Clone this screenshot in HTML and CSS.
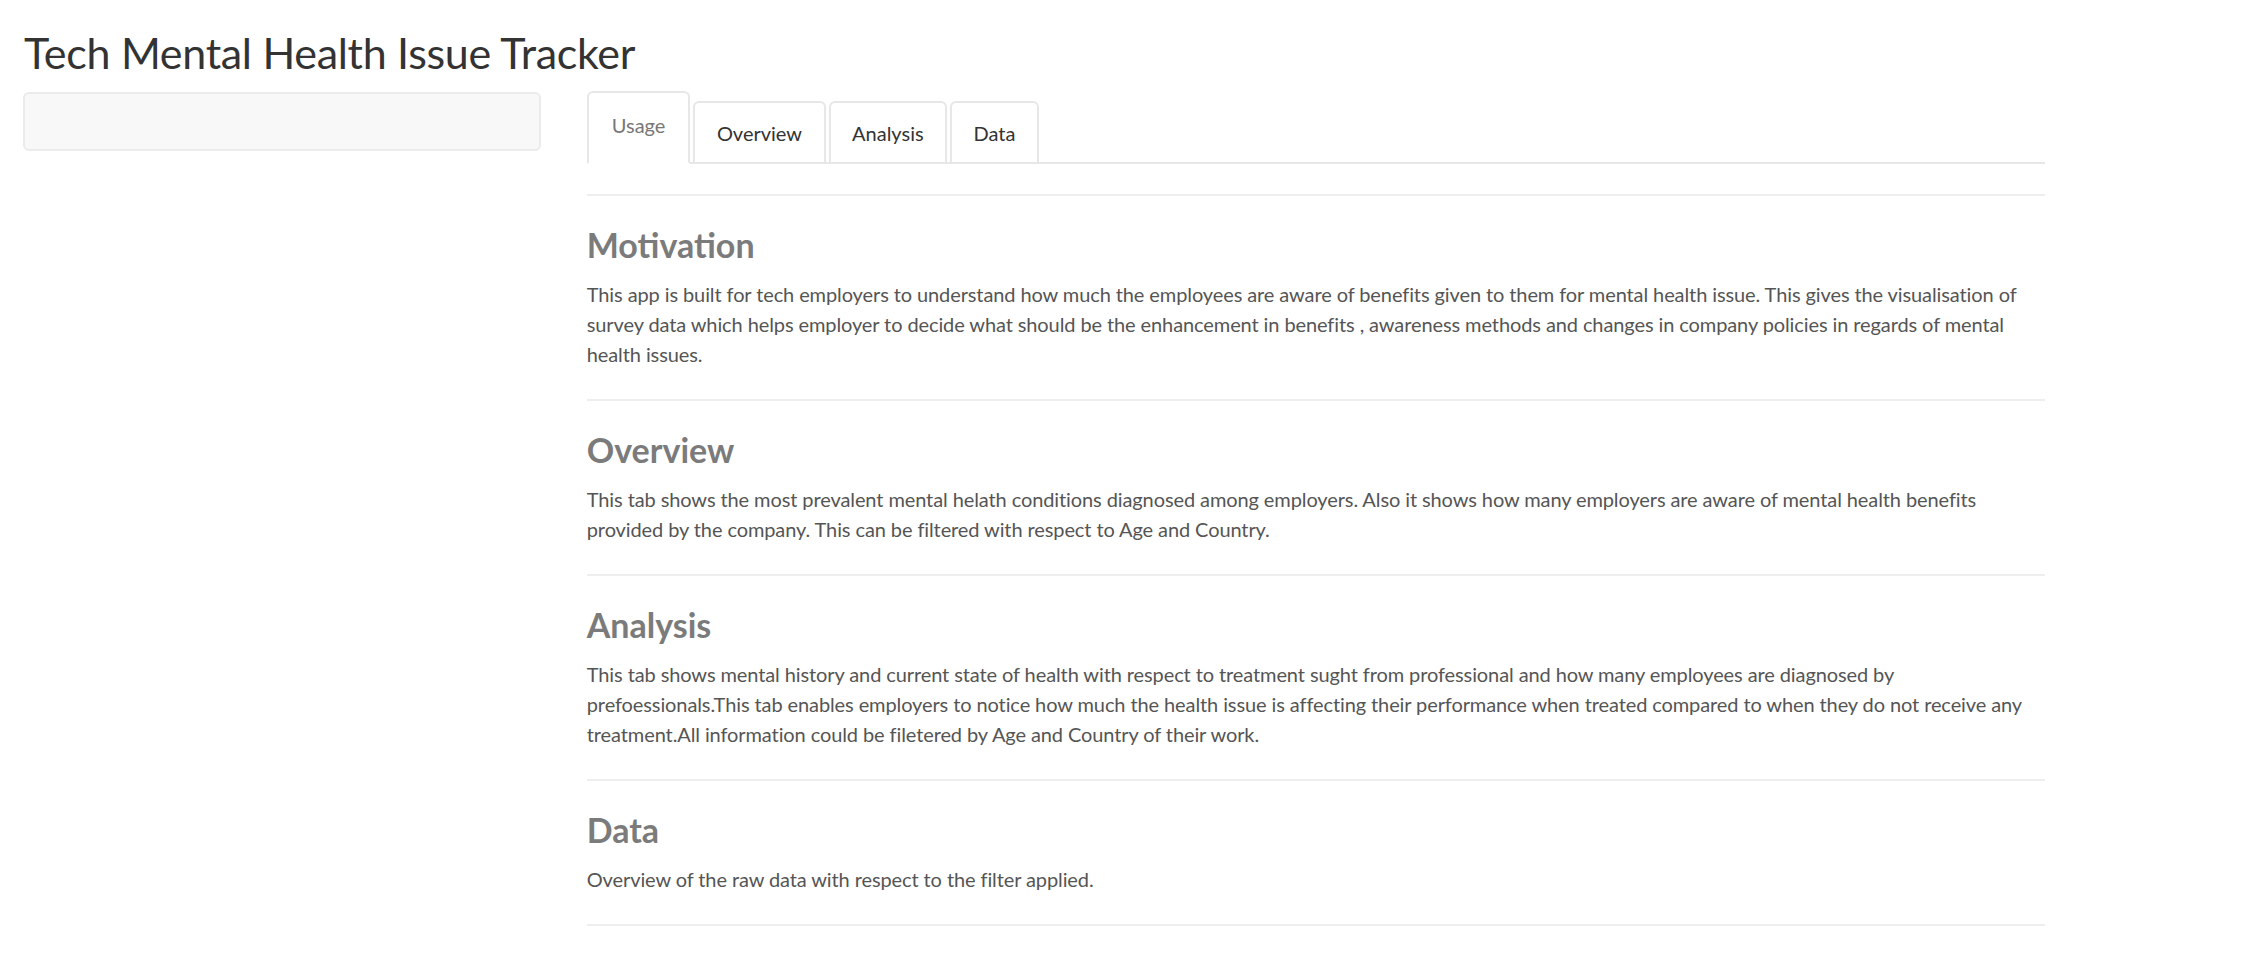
FILE: index.html
```html
<!DOCTYPE html>
<html lang="en">
<head>
<meta charset="utf-8">
<title>Tech Mental Health Issue Tracker</title>
<link rel="stylesheet" href="styles.css">
</head>
<body>
<div class="page">
  <h2 class="title">Tech Mental Health Issue Tracker</h2>
  <div class="row">
    <div class="side">
      <div class="well"></div>
    </div>
    <div class="main">
      <ul class="tabs">
        <li class="tab active">Usage</li>
        <li class="tab">Overview</li>
        <li class="tab">Analysis</li>
        <li class="tab">Data</li>
      </ul>
      <div class="content">
        <hr class="rule">
        <h3 class="head">Motivation</h3>
        <p class="text">This app is built for tech employers to understand how much the employees are aware of benefits given to them for mental health issue. This gives the visualisation of survey data which helps employer to decide what should be the enhancement in benefits , awareness methods and changes in company policies in regards of mental health issues.</p>
        <hr class="rule">
        <h3 class="head">Overview</h3>
        <p class="text">This tab shows the most prevalent mental helath conditions diagnosed among employers. Also it shows how many employers are aware of mental health benefits provided by the company. This can be filtered with respect to Age and Country.</p>
        <hr class="rule">
        <h3 class="head">Analysis</h3>
        <p class="text">This tab shows mental history and current state of health with respect to treatment sught from professional and how many employees are diagnosed by prefoessionals.This tab enables employers to notice how much the health issue is affecting their performance when treated compared to when they do not receive any treatment.All information could be filetered by Age and Country of their work.</p>
        <hr class="rule">
        <h3 class="head">Data</h3>
        <p class="text">Overview of the raw data with respect to the filter applied.</p>
        <hr class="rule">
      </div>
    </div>
  </div>
</div>
</body>
</html>
```

FILE: styles.css
```css
* { box-sizing: border-box; }

html, body {
  margin: 0;
  padding: 0;
  background: #ffffff;
}

body {
  font-family: Lato, "Open Sans", sans-serif;
  font-size: 20px;
  line-height: 30px;
  color: #555555;
}

.page {
  padding: 0 23px;
}

.title {
  margin: 28px 0 0 0;
  padding: 0 0 0 1px;
  font-size: 43px;
  line-height: 49px;
  font-weight: 400;
  color: #333333;
  letter-spacing: -0.3px;
}

.row {
  display: grid;
  grid-template-columns: 25% 66.6667%;
  margin: 15px -23px 0;
}

.side {
  padding: 0 22.5px;
}

.well {
  height: 59px;
  background: #f8f8f8;
  border: 2px solid #ebebeb;
  border-radius: 6px;
}

.main {
  padding: 0 22.5px 0 23px;
}

.tabs {
  list-style: none;
  margin: 0;
  padding: 0;
  display: flex;
  align-items: flex-end;
  border-bottom: 2px solid #e7e7e7;
  height: 72px;
}

.tab {
  margin: 0 3px -2px 0;
  padding: 15px 21.5px 14px;
  border: 2px solid #e7e7e7;
  border-bottom: 2px solid #e7e7e7;
  border-radius: 6px 6px 0 0;
  color: #333333;
  font-size: 20px;
  line-height: 30px;
  background: #ffffff;
}

.tab.active {
  padding: 17px 23px 22px;
  border-bottom-color: #ffffff;
  color: #777777;
}

.content {
  padding-top: 0;
}

.rule {
  margin: 30px 0;
  border: 0;
  border-top: 2px solid #eeeeee;
  height: 0;
}

.head {
  margin: 30px 0 15px;
  font-size: 34px;
  line-height: 38px;
  font-weight: 700;
  color: #7b7b7b;
}

.text {
  margin: 0 0 15px;
  letter-spacing: -0.1px;
}
```
